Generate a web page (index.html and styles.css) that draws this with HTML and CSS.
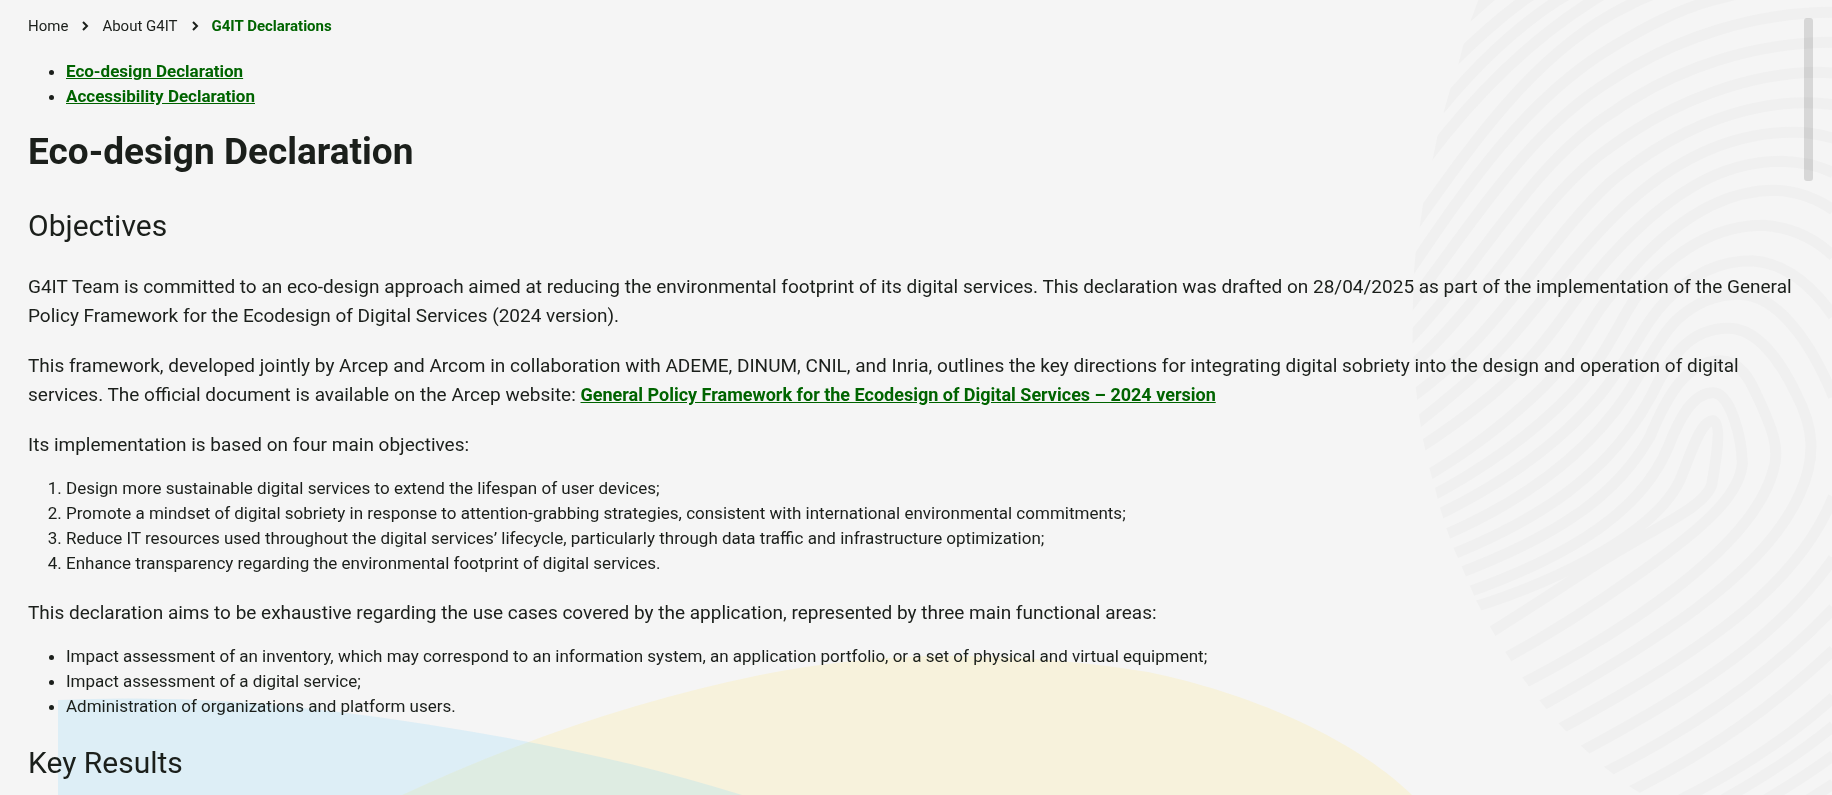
FILE: index.html
```html
<!DOCTYPE html>
<html lang="en">
<head>
<meta charset="utf-8">
<title>G4IT Declarations</title>
<link rel="stylesheet" href="styles.css">
</head>
<body>
<svg class="blobs" viewBox="0 0 1832 795" preserveAspectRatio="xMidYMax slice" aria-hidden="true">
  <path class="blob-yellow" d="M402 795Q580 712 760 675Q860 655 960 656Q1060 657 1148 672C1245 692 1350 735 1412 795Z"/>
  <path class="blob-blue" d="M58 700Q200 694 339 712C480 730 620 756 742 795H58Z"/>
</svg>
<svg class="fingerprint" viewBox="0 0 1356 2385" preserveAspectRatio="xMaxYMin meet" aria-hidden="true">
  <clipPath id="edge"><path d="M295 0L272 62L250 135L233 200L210 270L190 340L172 410L158 478L130 605L120 675L107 760L102 815L98 930L97 1030L102 1110L108 1170L118 1250L129 1318L148 1405L165 1465L180 1523L198 1582L219 1640L242 1693L265 1747L289 1802L330 1880L375 1955L425 2030L477 2100L535 2170L600 2235L668 2297L745 2357L790 2385H1356V0Z"/></clipPath>
  <g clip-path="url(#edge)">
    <path d="M230 80L340 -18"/>
    <path d="M220 185Q330 75 432 0L470 -25"/>
    <path d="M180 328Q350 120 535 0L575 -24"/>
    <path d="M140 475Q370 170 640 0L690 -30"/>
    <path d="M100 680C270 440 450 180 696 42Q740 18 778 0L830 -22"/>
    <path d="M80 825C240 590 430 300 696 142C790 85 890 30 1000 0L1080 -20"/>
    <path d="M70 940C260 700 430 400 696 239C890 110 1130 37 1360 37"/>
    <path d="M70 1035C280 830 440 500 696 338C890 200 1130 127 1360 127"/>
    <path d="M70 1120C330 900 470 590 696 438C870 310 1100 217 1320 217L1360 219"/>
    <path d="M80 1202C370 1000 480 740 696 542C870 400 1070 308 1280 308Q1320 308 1360 314"/>
    <path d="M90 1285Q150 1240 215 1185C430 1010 520 830 696 655C860 490 1040 397 1240 397Q1300 397 1360 415"/>
    <path d="M105 1352Q220 1280 335 1185C520 1030 560 910 696 765C860 585 1020 484 1205 484Q1290 486 1360 518"/>
    <path d="M125 1437Q310 1330 465 1185C600 1060 610 980 696 880C850 680 1010 571 1185 571Q1280 575 1360 630"/>
    <path d="M140 1496Q400 1360 570 1185C690 1060 720 950 790 860C900 740 1020 676 1150 676Q1270 684 1360 768"/>
    <path d="M158 1552Q480 1400 660 1185C760 1060 790 970 860 900C940 820 1020 782 1115 782Q1250 790 1360 948"/>
    <path d="M178 1612Q560 1450 740 1185C800 1090 840 1010 890 960C950 905 1010 883 1075 883C1190 883 1290 1020 1360 1190"/>
    <path d="M195 1672C480 1560 690 1420 815 1185C870 1070 930 985 1045 985C1130 985 1200 1080 1250 1185C1300 1280 1310 1370 1260 1480C1150 1730 800 1940 470 2125"/>
    <path d="M215 1728C560 1600 720 1470 810 1310C860 1190 920 1082 1020 1082C1080 1082 1110 1140 1130 1185C1180 1290 1200 1350 1180 1410C1120 1640 740 1890 420 2055"/>
    <path d="M240 1785C600 1660 790 1520 865 1340C900 1250 940 1178 1000 1178C1050 1178 1085 1310 1087 1390C1080 1480 980 1570 860 1660C720 1765 550 1880 370 1978"/>
    <path d="M270 1825C560 1735 830 1590 900 1440C930 1370 960 1260 1000 1262C1025 1275 1010 1370 995 1455C970 1530 800 1590 600 1725Q470 1810 320 1905"/>
    <path d="M1360 1490C1260 1740 1010 1935 520 2197"/>
    <path d="M1360 1675C1210 1890 990 2050 590 2262"/>
    <path d="M1360 1825C1190 2005 970 2170 660 2325"/>
    <path d="M1360 1950C1190 2110 1000 2250 740 2380"/>
    <path d="M1360 2092C1230 2210 1080 2310 890 2405"/>
    <path d="M1360 2178Q1210 2300 1010 2410"/>
    <path d="M1360 2266Q1260 2340 1130 2415"/>
    <path d="M1360 2352L1260 2415"/>
  </g>
</svg>
<div class="scroll-thumb"></div>
<main class="page">
  <nav class="crumbs" aria-label="Breadcrumb">
    <a class="crumb" href="#home">Home</a>
    <svg class="chevron" viewBox="0 0 8 10" aria-hidden="true"><path d="M2 1l4 4-4 4"/></svg>
    <a class="crumb" href="#about">About G4IT</a>
    <svg class="chevron" viewBox="0 0 8 10" aria-hidden="true"><path d="M2 1l4 4-4 4"/></svg>
    <a class="crumb crumb-current" href="#declarations" aria-current="page">G4IT Declarations</a>
  </nav>
  <ul class="list toc">
    <li><a class="link" href="#eco">Eco-design Declaration</a></li>
    <li><a class="link" href="#accessibility">Accessibility Declaration</a></li>
  </ul>
  <h1 class="title" id="eco">Eco-design Declaration</h1>
  <h2 class="subtitle">Objectives</h2>
  <p class="text">G4IT Team is committed to an eco-design approach aimed at reducing the environmental footprint of its digital services. This declaration was drafted on 28/04/2025 as part of the implementation of the General Policy Framework for the Ecodesign of Digital Services (2024 version).</p>
  <p class="text">This framework, developed jointly by Arcep and Arcom in collaboration with ADEME, DINUM, CNIL, and Inria, outlines the key directions for integrating digital sobriety into the design and operation of digital services. The official document is available on the Arcep website: <a class="link" href="#framework">General Policy Framework for the Ecodesign of Digital Services – 2024 version</a></p>
  <p class="text">Its implementation is based on four main objectives:</p>
  <ol class="list">
    <li>Design more sustainable digital services to extend the lifespan of user devices;</li>
    <li>Promote a mindset of digital sobriety in response to attention-grabbing strategies, consistent with international environmental commitments;</li>
    <li>Reduce IT resources used throughout the digital services’ lifecycle, particularly through data traffic and infrastructure optimization;</li>
    <li>Enhance transparency regarding the environmental footprint of digital services.</li>
  </ol>
  <p class="text">This declaration aims to be exhaustive regarding the use cases covered by the application, represented by three main functional areas:</p>
  <ul class="list">
    <li>Impact assessment of an inventory, which may correspond to an information system, an application portfolio, or a set of physical and virtual equipment;</li>
    <li>Impact assessment of a digital service;</li>
    <li>Administration of organizations and platform users.</li>
  </ul>
  <h2 class="subtitle">Key Results</h2>
</main>
</body>
</html>
```
FILE: styles.css
```css
body {
  margin: 0;
  background: #f5f5f5;
  color: #1b1f1b;
  font-family: Roboto, "Liberation Sans", sans-serif;
  overflow: hidden;
}

/* Decorative background */
.blobs { position: fixed; inset: 0; width: 100%; height: 100%; z-index: -1; }
.blob-yellow { fill: #f7f2dc; }
.blob-blue { fill: rgba(135, 213, 250, .22); }
.fingerprint { position: fixed; top: 0; right: 0; height: 100%; z-index: -1; }
.fingerprint g { fill: none; stroke: #f0f0f0; stroke-width: 33; }
.scroll-thumb {
  position: fixed;
  top: 18px;
  right: 19px;
  width: 9px;
  height: 163px;
  border-radius: 3px;
  background: rgba(0, 0, 0, .12);
}

.page { padding: 16px 40px 0 28px; }
.crumbs { display: flex; align-items: center; gap: 13px; font-size: 15px; line-height: 20px; }
.crumb { color: inherit; text-decoration: none; }
.crumb-current, .link { color: #006400; font-weight: 700; }
.chevron { width: 8px; height: 10px; fill: none; stroke: currentColor; stroke-width: 2; }
.list { margin: 17px 0 22px; padding-left: 38px; font-size: 17px; line-height: 25px; }
.toc { margin: 23px 0 19px; }
.title { margin: 0 0 30px; font-size: 37px; line-height: 48px; }
.subtitle { margin: 24px 0 26px; font-size: 30px; line-height: 40px; font-weight: 400; }
.text { margin: 21px 0 17px; font-size: 19px; line-height: 29px; }
.text .link { font-size: 18px; }
```
